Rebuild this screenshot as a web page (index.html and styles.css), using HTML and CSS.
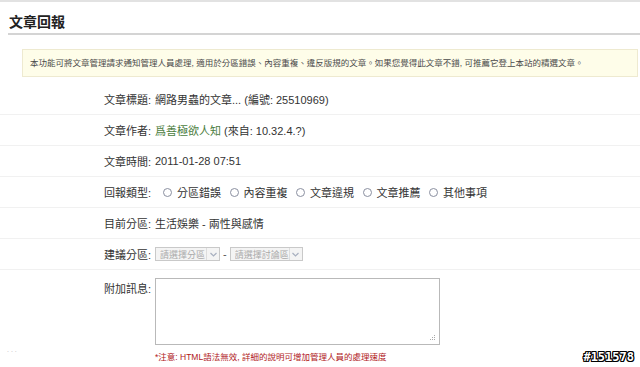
FILE: index.html
```html
<!DOCTYPE html>
<html lang="zh-Hant">
<head>
<meta charset="utf-8">
<link rel="stylesheet" href="styles.css">
</head>
<body>
<div class="page">
  <div class="topline"></div>
  <h2 class="title">文章回報</h2>
  <div class="notice">本功能可將文章管理請求通知管理人員處理, 適用於分區錯誤、內容重複、違反版規的文章。如果您覺得此文章不錯, 可推薦它登上本站的精選文章。</div>
  <div class="form">
    <div class="row">
      <div class="label">文章標題:</div>
      <div class="value">網路男蟲的文章... (編號: 25510969)</div>
    </div>
    <div class="row">
      <div class="label">文章作者:</div>
      <div class="value"><span class="author">爲善極欲人知</span> (來自: 10.32.4.?)</div>
    </div>
    <div class="row">
      <div class="label">文章時間:</div>
      <div class="value">2011-01-28 07:51</div>
    </div>
    <div class="row">
      <div class="label">回報類型:</div>
      <div class="value radios">
        <label class="radio"><span class="circle"></span>分區錯誤</label>
        <label class="radio"><span class="circle"></span>內容重複</label>
        <label class="radio"><span class="circle"></span>文章違規</label>
        <label class="radio"><span class="circle"></span>文章推薦</label>
        <label class="radio"><span class="circle"></span>其他事項</label>
      </div>
    </div>
    <div class="row">
      <div class="label">目前分區:</div>
      <div class="value">生活娛樂 - 兩性與感情</div>
    </div>
    <div class="row">
      <div class="label">建議分區:</div>
      <div class="value selects">
        <span class="select s1"><span class="opt">請選擇分區</span><span class="arrow"><svg width="7" height="5" viewBox="0 0 7 5"><path d="M0.5 1 L3.5 4 L6.5 1" fill="none" stroke="#a8b0c0" stroke-width="1.2"/></svg></span></span>
        <span class="dash">-</span>
        <span class="select s2"><span class="opt">請選擇討論區</span><span class="arrow"><svg width="7" height="5" viewBox="0 0 7 5"><path d="M0.5 1 L3.5 4 L6.5 1" fill="none" stroke="#a8b0c0" stroke-width="1.2"/></svg></span></span>
      </div>
    </div>
    <div class="row last">
      <div class="label">附加訊息:</div>
      <div class="value">
        <div class="textarea"><svg class="grip" width="6" height="6" viewBox="0 0 6 6"><rect x="4" y="0" width="1" height="1" fill="#aaa"/><rect x="4" y="2" width="1" height="1" fill="#aaa"/><rect x="2" y="2" width="1" height="1" fill="#aaa"/><rect x="4" y="4" width="1" height="1" fill="#aaa"/><rect x="2" y="4" width="1" height="1" fill="#aaa"/><rect x="0" y="4" width="1" height="1" fill="#aaa"/></svg></div>
        <div class="note">*注意: HTML語法無效, 詳細的說明可增加管理人員的處理速度</div>
      </div>
    </div>
  </div>
  <div class="dots">. . .</div>
  <div class="watermark">#151578</div>
</div>
</body>
</html>
```
FILE: styles.css
```css
html, body {
  margin: 0;
  padding: 0;
  background: #fff;
}
body {
  font-family: "Liberation Sans", "Noto Sans CJK TC", sans-serif;
  color: #333;
  width: 640px;
  height: 367px;
  overflow: hidden;
}
.page {
  position: relative;
  width: 640px;
  height: 367px;
}
.topline {
  height: 2px;
  background: #e2e2e2;
}
.title {
  margin: 0 0 0 8px;
  padding: 10px 0 0 1px;
  height: 21px;
  font-size: 14px;
  line-height: 21px;
  font-weight: bold;
  color: #222;
  border-bottom: 2px solid #d4d4d4;
}
.notice {
  margin: 14px 2px 0 22px;
  height: 26px;
  line-height: 26px;
  padding-left: 7px;
  background: #fefde9;
  border: 1px solid #eeead0;
  font-size: 8.5px;
  color: #4a4a4a;
  white-space: nowrap;
  overflow: hidden;
}
.form {
  margin-top: 7px;
}
.row {
  display: grid;
  grid-template-columns: 151px 1fr;
  column-gap: 4px;
  height: 30px;
  align-items: center;
  border-bottom: 1px solid #f1f1f1;
  font-size: 11px;
}
.row.last {
  border-bottom: none;
  align-items: start;
  padding-top: 8px;
}
.label {
  text-align: right;
  color: #333;
}
.row.last .label {
  padding-top: 2px;
}
.value {
  color: #333;
  white-space: nowrap;
}
.author {
  color: #4b7d3e;
}
.radios {
  display: flex;
  gap: 0;
}
.radio {
  display: flex;
  align-items: center;
  margin-right: 8.5px;
}
.radio:first-child {
  margin-left: 8px;
}
.circle {
  width: 9px;
  height: 9px;
  box-sizing: border-box;
  border: 1px solid #8a8fa0;
  border-radius: 50%;
  margin-right: 5px;
  background: #fff;
}
.selects {
  display: flex;
  align-items: center;
}
.select {
  display: inline-flex;
  align-items: center;
  height: 14px;
  box-sizing: border-box;
  border: 1px solid #c9c9c9;
  background: #f4f4f4;
  color: #aaa;
  font-size: 9px;
  padding-left: 4px;
  overflow: hidden;
}
.opt {
  flex: 1;
  overflow: hidden;
}
.s1 { width: 65px; }
.s2 { width: 73px; }
.arrow {
  display: flex;
  align-items: center;
  justify-content: center;
  flex: none;
  width: 12px;
  height: 12px;
  border-left: 1px solid #ddd;
}
.dash {
  margin: 0 3px;
  color: #555;
}
.textarea {
  position: relative;
  width: 285px;
  height: 67px;
  box-sizing: border-box;
  border: 1px solid #b9b9b9;
  background: #fff;
}
.grip {
  position: absolute;
  right: 3px;
  bottom: 3px;
}
.note {
  margin-top: 5px;
  font-size: 8.5px;
  color: #b0181a;
}
.dots {
  position: absolute;
  left: 7px;
  top: 346px;
  font-size: 7px;
  color: #bbb;
  letter-spacing: 0;
}
.watermark {
  position: absolute;
  right: 6px;
  bottom: 3px;
  font-family: "DejaVu Sans Mono", monospace;
  font-weight: bold;
  font-size: 12px;
  color: #fff;
  text-shadow: -1px 0 #000, 1px 0 #000, 0 -1px #000, 0 1px #000, -1px -1px #000, 1px 1px #000, 1px -1px #000, -1px 1px #000;
}
```
